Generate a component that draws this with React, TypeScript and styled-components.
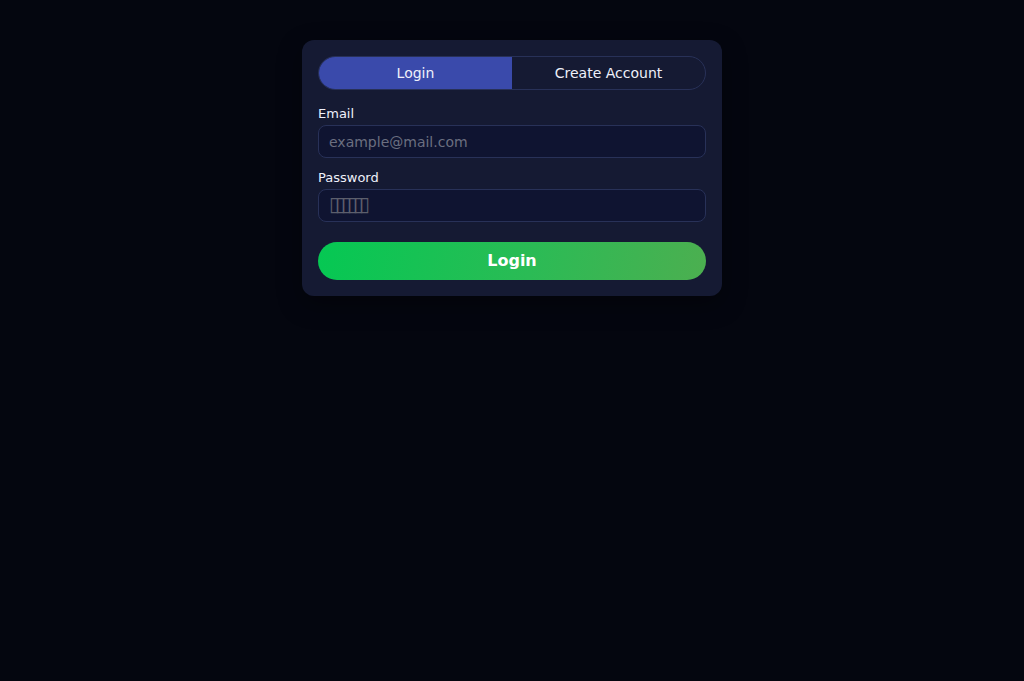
import React, { useState } from "react";
import styled, { createGlobalStyle } from "styled-components";

const Global = createGlobalStyle`
  html, body { margin: 0; padding: 0; background: #04060f; }
  body { font-family: "DejaVu Sans", "Noto Sans", sans-serif; color: #e6e9f5; min-height: 681px; }
  * { box-sizing: border-box; }
`;

const Page = styled.div`
  display: flex;
  justify-content: center;
  align-items: flex-start;
  padding-top: 40px;
  min-height: 681px;
`;

const Card = styled.div`
  width: 420px;
  background: #151a33;
  border-radius: 12px;
  padding: 16px;
  display: flex;
  flex-direction: column;
  box-shadow: 0 8px 24px rgba(0, 0, 0, 0.35);
`;

const Tabs = styled.div`
  display: flex;
  height: 34px;
  border: 1px solid #283158;
  border-radius: 999px;
  overflow: hidden;
  margin-bottom: 14px;
`;

const Tab = styled.button<{ $active?: boolean }>`
  flex: 1;
  border: none;
  margin: 0;
  padding: 0;
  font-family: "DejaVu Sans", sans-serif;
  font-size: 14px;
  color: #eef0fa;
  background: ${(p) => (p.$active ? "#3a4aab" : "transparent")};
  cursor: pointer;
`;

const Label = styled.label`
  display: block;
  font-size: 13px;
  line-height: 15px;
  padding-top: 2px;
  color: #eef0fa;
  margin-bottom: 4px;
`;

const Field = styled.div<{ $gap?: number }>`
  display: flex;
  flex-direction: column;
  margin-bottom: ${(p) => p.$gap ?? 10}px;
`;

const Input = styled.input<{ $tight?: boolean }>`
  height: 33px;
  width: 100%;
  background: #0f1431;
  border: 1px solid #283158;
  border-radius: 8px;
  padding: 0 10px;
  font-family: "DejaVu Sans", sans-serif;
  font-size: 14px;
  color: #e6e9f5;
  outline: none;
  &::placeholder {
    color: ${(p) => (p.$tight ? "#5c5f6c" : "#6b6f80")};
    font-size: ${(p) => (p.$tight ? "20px" : "14px")};
    letter-spacing: ${(p) => (p.$tight ? "-5px" : "normal")};
  }
`;

const Submit = styled.button`
  height: 38px;
  border: none;
  border-radius: 999px;
  padding: 0 0 2px;
  background: linear-gradient(100deg, #05c853 0%, #2bbb55 55%, #4caf50 100%);
  color: #ffffff;
  font-family: "DejaVu Sans", sans-serif;
  font-weight: bold;
  font-size: 16px;
  cursor: pointer;
`;

export default function App() {
  const [tab, setTab] = useState<"login" | "create">("login");
  return (
    <>
      <Global />
      <Page>
        <Card>
          <Tabs>
            <Tab $active={tab === "login"} onClick={() => setTab("login")}>Login</Tab>
            <Tab $active={tab === "create"} onClick={() => setTab("create")}>Create Account</Tab>
          </Tabs>
          <Field>
            <Label>Email</Label>
            <Input type="email" placeholder="example@mail.com" />
          </Field>
          <Field $gap={20}>
            <Label>Password</Label>
            <Input $tight type="password" placeholder="▯▯▯▯▯▯" />
          </Field>
          <Submit>Login</Submit>
        </Card>
      </Page>
    </>
  );
}
